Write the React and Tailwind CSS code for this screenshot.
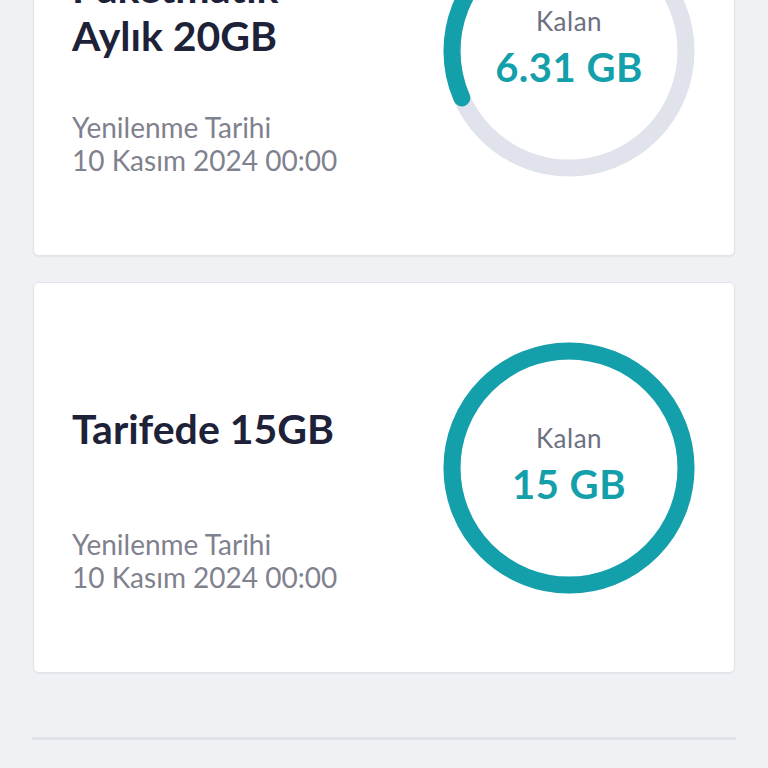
import React from 'react';

const packages = [
  { id: 1, title: ['Paketmatik', 'Aylık 20GB'], remaining: '6.31 GB', ratio: 6.31 / 20, renewal: '10 Kasım 2024 00:00' },
  { id: 2, title: ['Tarifede 15GB'], remaining: '15 GB', ratio: 1, renewal: '10 Kasım 2024 00:00' },
];

// Ring drawn counter-clockwise from 12 o'clock, like the app does
function UsageRing({ ratio, remaining }) {
  const r = 117;
  const c = 2 * Math.PI * r;
  const full = ratio >= 0.999;
  return (
    <div className="relative w-[252px] h-[252px] shrink-0">
      <svg width="252" height="252" viewBox="0 0 252 252" className="absolute inset-0">
        <circle cx="126" cy="126" r={r} fill="none" stroke="#e0e3ec" strokeWidth="17" />
        <circle
          cx="126"
          cy="126"
          r={r}
          fill="none"
          stroke="#14a0aa"
          strokeWidth="17"
          strokeLinecap={full ? 'butt' : 'round'}
          strokeDasharray={`${c * ratio} ${c}`}
          transform="translate(252 0) scale(-1 1) rotate(-90 126 126)"
        />
      </svg>
      <div className="absolute inset-0 flex flex-col items-center justify-center pb-[6px]">
        <span className="text-[26px] leading-[32px] text-[#6d7080] tracking-[0.5px]">Kalan</span>
        <span className="mt-[6px] text-[40px] leading-[48px] font-bold text-[#14a0aa] tracking-[0.5px]">{remaining}</span>
      </div>
    </div>
  );
}

export default function App() {
  return (
    <div className="min-h-[768px] bg-[#f0f1f5] overflow-hidden" style={{ fontFamily: 'Lato, "Noto Sans", sans-serif' }}>
      <div className="px-[33px] -mt-[135px] flex flex-col gap-[26px]">
        {packages.map((p) => (
          <div
            key={p.id}
            className="bg-white border border-[#e0e3e9] rounded-[6px] shadow-[0_1px_2px_rgba(0,0,0,0.06)] flex justify-between pl-[38px] pr-[39px] pt-[59px] pb-[78px]"
          >
            <div className="flex flex-col">
              <div className="flex-1 flex flex-col justify-center pb-[12px]">
                {p.title.map((line) => (
                  <div key={line} className="text-[41px] leading-[48px] font-bold text-[#1e2238]">{line}</div>
                ))}
              </div>
              <div className="text-[28px] leading-[33px] text-[#7f828e]">
                <div>Yenilenme Tarihi</div>
                <div>{p.renewal}</div>
              </div>
            </div>
            <UsageRing ratio={p.ratio} remaining={p.remaining} />
          </div>
        ))}
      </div>
      <div className="mx-[32px] mt-[64px] h-[3px] bg-[#e1e3e9]" />
    </div>
  );
}
